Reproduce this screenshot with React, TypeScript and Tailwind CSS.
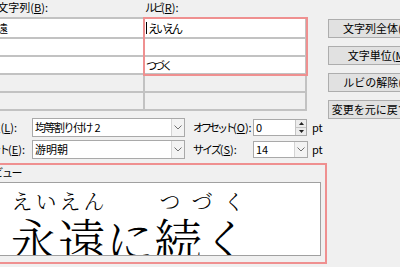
import type { ReactNode } from 'react';

const ui = "font-['Noto_Sans_CJK_JP',sans-serif]";

function Chevron() {
  return (
    <svg width="8" height="5" viewBox="0 0 8 5" fill="none">
      <path d="M0.5 0.5 L4 4 L7.5 0.5" stroke="#707070" strokeWidth="1" />
    </svg>
  );
}

// Right-aligned label that may run off the left edge of the window.
function Label({ w, children }: { w: string; children: ReactNode }) {
  return <div className={`flex shrink-0 justify-end whitespace-nowrap ${w}`}>{children}</div>;
}

function Combo({ text, w, h }: { text: ReactNode; w: string; h: string }) {
  return (
    <div className={`flex shrink-0 border border-[#a9a9a9] bg-white ${w} ${h}`}>
      <div className="flex flex-1 items-center pl-[2px] leading-none whitespace-nowrap">{text}</div>
      <div className="flex w-[13px] items-center justify-center border-l border-[#d4d4d4] bg-[#f3f3f3]">
        <Chevron />
      </div>
    </div>
  );
}

function Spin({ value }: { value: string }) {
  return (
    <div className="flex h-[17px] w-[54px] shrink-0 border border-[#a9a9a9] bg-white">
      <div className="flex flex-1 items-center pl-[2px] leading-none">{value}</div>
      <div className="flex w-[11px] flex-col border-l border-[#c4c4c4] bg-[#ececec]">
        <div className="flex flex-1 items-center justify-center border-b border-[#c4c4c4]">
          <svg width="5" height="3" viewBox="0 0 5 3">
            <path d="M0 3 L2.5 0 L5 3 Z" fill="#222" />
          </svg>
        </div>
        <div className="flex flex-1 items-center justify-center">
          <svg width="5" height="3" viewBox="0 0 5 3">
            <path d="M0 0 L2.5 3 L5 0 Z" fill="#222" />
          </svg>
        </div>
      </div>
    </div>
  );
}

const rows = [
  { base: '永遠', ruby: 'えいえん', white: true, h: 'h-[20px]', cursor: true },
  { base: '', ruby: '', white: true, h: 'h-[18px]', cursor: false },
  { base: '', ruby: 'つづく', white: true, h: 'h-[18px]', cursor: false },
  { base: '', ruby: '', white: false, h: 'h-[18px]', cursor: false },
  { base: '', ruby: '', white: false, h: 'h-[18px]', cursor: false },
];

function RubyGrid() {
  return (
    <div className="w-[307px] border-t-2 border-[#c2c2c2]">
      {rows.map((r, i) => (
        <div key={i} className={`flex border-b-2 border-[#c2c2c2] ${r.h}`}>
          <div
            className={`flex w-[143px] items-center overflow-hidden leading-none ${r.white ? 'bg-white' : 'bg-[#f0f0f0]'}`}
          >
            <span className="ml-[-14px] whitespace-nowrap">{r.base}</span>
          </div>
          <div className="w-[2px] bg-[#c2c2c2]" />
          <div
            className={`flex w-[160px] items-center pl-[1px] leading-none ${r.white ? 'bg-white' : 'bg-[#f0f0f0]'}`}
          >
            {r.cursor && <span className="mr-px h-[12px] w-px bg-black" />}
            <span className="whitespace-nowrap tracking-[-3px]">{r.ruby}</span>
          </div>
          <div className="w-[2px] bg-[#c2c2c2]" />
        </div>
      ))}
    </div>
  );
}

function RubyGroup({ base, ruby, w }: { base: string; ruby: string; w: string }) {
  return (
    <div className={`flex shrink-0 flex-col ${w}`}>
      <div className="flex h-[21px] justify-around text-[21px] leading-[21px]">
        {ruby.split('').map((c, i) => (
          <span key={i}>{c}</span>
        ))}
      </div>
      <div className="mt-[4px] whitespace-nowrap text-[48px] leading-[48px]">{base}</div>
    </div>
  );
}

function Preview() {
  return (
    <div className="ml-[-2px] mt-[3px] h-[74px] w-[323px] overflow-hidden border border-[#a0a0a0] bg-white pl-[11px] pt-[7px] font-light text-black font-['Noto_Serif_CJK_JP','Noto_Sans_CJK_JP',serif]">
      <div className="flex">
        <RubyGroup base="永遠" ruby="えいえん" w="w-[96px]" />
        <RubyGroup base="に" ruby="" w="w-[48px]" />
        <RubyGroup base="続く" ruby="つづく" w="w-[96px]" />
      </div>
    </div>
  );
}

const buttons = ['文字列全体(G)', '文字単位(M)', 'ルビの解除(C)', '変更を元に戻す(U)'];

export default function App() {
  return (
    <div className={`flex h-[267px] w-[400px] overflow-hidden bg-[#f0f0f0] text-[11px] text-black ${ui}`}>
      <div className="relative flex w-[328px] shrink-0 flex-col">
        <div className="flex h-[17px] items-center pb-[2px] leading-none">
          <Label w="w-[48px]">
            対象文字列(<span className="underline">B</span>):
          </Label>
          <div className="ml-[97px] whitespace-nowrap">
            <span className="tracking-[-3px]">ルビ</span>(<span className="underline">R</span>):
          </div>
        </div>
        <RubyGrid />

        <div className="mt-[7px] flex h-[19px] items-center leading-none">
          <div className="w-[32px] shrink-0 pr-[15px]">
            <Label w="w-[17px]">
              配置(<span className="underline">L</span>):
            </Label>
          </div>
          <Combo
            text={
              <>
                <span className="tracking-[-1.5px]">均等割り付け</span>&nbsp;2
              </>
            }
            w="w-[153px]"
            h="h-[19px]"
          />
          <div className="ml-[8px] w-[60px] shrink-0 whitespace-nowrap">
            <span className="tracking-[-3px]">オフセット</span>(<span className="underline">O</span>):
          </div>
          <Spin value="0" />
          <div className="ml-[5px]">pt</div>
        </div>

        <div className="mt-[3px] flex h-[19px] items-center leading-none">
          <div className="w-[32px] shrink-0 pr-[7px]">
            <Label w="w-[25px]">
              <span className="tracking-[-2px]">フォント</span>(<span className="underline">E</span>):
            </Label>
          </div>
          <Combo text="游明朝" w="w-[153px]" h="h-[19px]" />
          <div className="ml-[8px] w-[60px] shrink-0 whitespace-nowrap">
            <span className="tracking-[-2px]">サイズ</span>(<span className="underline">S</span>):
          </div>
          <Combo text="14" w="w-[55px]" h="h-[17px]" />
          <div className="ml-[4px]">pt</div>
        </div>

        <div className="mt-[4px] flex h-[16px] items-center pt-[2px] leading-none">
          <Label w="w-[21px]">
            <span className="tracking-[-1.5px]">プレビュー</span>
          </Label>
        </div>
        <Preview />

        <div className="pointer-events-none absolute left-[143px] top-[17px] h-[59px] w-[165px] border-2 border-[#ef9090]" />
        <div className="pointer-events-none absolute left-[-2px] top-[163px] h-[101px] w-[329px] border-2 border-[#ef9090]" />
      </div>

      <div className="flex shrink-0 flex-col gap-[8px] pt-[19px]">
        {buttons.map((b) => (
          <div
            key={b}
            className="flex h-[19px] w-[100px] items-center justify-center whitespace-nowrap border border-[#adadad] bg-[#e1e1e1] leading-none"
          >
            {b.slice(0, -2)}
            <span className="underline">{b.slice(-2, -1)}</span>
            {b.slice(-1)}
          </div>
        ))}
      </div>
    </div>
  );
}
